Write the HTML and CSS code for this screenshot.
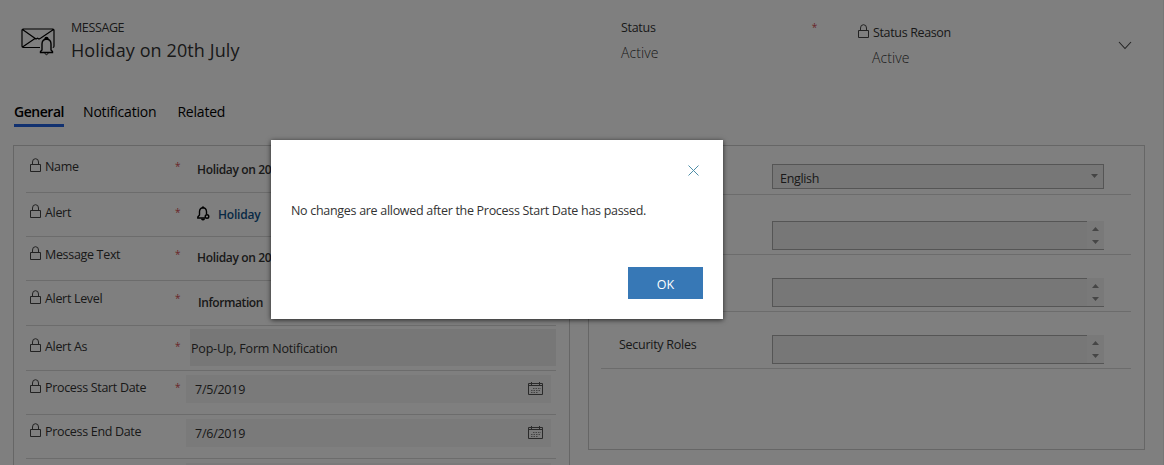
FILE: index.html
```html
<!DOCTYPE html>
<html lang="en">
<head>
<meta charset="utf-8">
<title>Message: Holiday on 20th July</title>
<link rel="stylesheet" href="styles.css">
</head>
<body>
<svg class="defs" width="0" height="0" aria-hidden="true">
  <symbol id="lock" viewBox="0 0 11 14"><path d="M.5 6.500h10v7H.5zM2.500 6.500V4a3 3.300 0 0 1 6 0v2.500" fill="none" stroke="currentColor"/></symbol>
  <symbol id="calendar" viewBox="0 0 15 13"><path d="M.5 1.500h14v11H.5zM.5 3.500h14M3.500 0v3M11.500 0v3" fill="none" stroke="currentColor"/><path d="M5 6.500h8M3 8.500h10M3 10.500h7" fill="none" stroke="currentColor" stroke-dasharray="1.500 1" opacity=".7"/></symbol>
  <symbol id="spin" viewBox="0 0 17 29"><path d="M5 10h7L8.500 6zM5 19h7l-3.500 4z" fill="currentColor"/></symbol>
</svg>
<div class="page">
  <header class="header">
    <svg class="entity-icon" width="34" height="28" viewBox="0 0 34 28" fill="none" stroke="#000" stroke-width="1.200">
      <path d="M19 19.500H2.200Q1 19.500 1 18.300V2.200Q1 1 2.200 1h29.600Q33 1 33 2.200v16.100q0 1.200-1.200 1.200M1.500 1.500l13.500 9.500 1.500-.800 1.500.800 1.500-.800L32.500 1.500M1.500 19l12.500-8.500"/>
      <path d="M19.500 24.500v-1l1.500-1.500v-6q0-4.500 4.500-5 4.500.500 4.500 5v6l1.500 1.500v1z" stroke-width="1.400"/>
      <path d="M24 10.800a1.500 1.500 0 0 1 3 0z" fill="#000"/>
      <path d="M23.500 25.200q2 3 4 0" stroke-width="1"/>
    </svg>
    <div class="title">
      <div class="entity">MESSAGE</div>
      <h1 class="record">Holiday on 20th July</h1>
    </div>
    <div class="status">
      <div class="status-label">Status <span class="req">*</span></div>
      <div class="status-value">Active</div>
    </div>
    <div class="status reason">
      <div class="status-label tight"><svg class="lock"><use href="#lock"/></svg>Status Reason</div>
      <div class="status-value">Active</div>
    </div>
    <svg class="chevron" width="14" height="9" viewBox="0 0 14 9"><path d="M1 1l6 6.500L13 1" fill="none" stroke="#444" stroke-width="1.100"/></svg>
  </header>
  <nav class="tabs">
    <a class="tab active">General</a>
    <a class="tab notification">Notification</a>
    <a class="tab">Related</a>
  </nav>
  <main class="panels">
    <section class="panel left">
      <div class="row r1"><div class="label"><svg class="lock"><use href="#lock"/></svg>Name</div><span class="req">*</span><div class="value">Holiday on 20th July</div></div>
      <div class="row r2"><div class="label"><svg class="lock"><use href="#lock"/></svg>Alert</div><span class="req">*</span><div class="value link"><svg class="bell" width="13" height="15" viewBox="0 0 13 15" fill="none" stroke="#000" stroke-width="1.400"><path d="M8 12H.800v-1L2.500 9V5.500Q2.800 2 6 1.800 9.200 2 9.500 5.500V8M5 1.200h2M4.500 13q1.500 1.500 3 0"/><circle cx="10" cy="10.500" r="1.800"/></svg>Holiday</div></div>
      <div class="row r3"><div class="label"><svg class="lock"><use href="#lock"/></svg>Message Text</div><span class="req">*</span><div class="value">Holiday on 20th July</div></div>
      <div class="row r4"><div class="label"><svg class="lock"><use href="#lock"/></svg>Alert Level</div><span class="req">*</span><div class="value info">Information</div></div>
      <div class="row r5"><div class="label"><svg class="lock"><use href="#lock"/></svg>Alert As</div><span class="req">*</span><div class="field multi">Pop-Up, Form Notification</div></div>
      <div class="row r6"><div class="label"><svg class="lock"><use href="#lock"/></svg>Process Start Date</div><span class="req">*</span><div class="field date">7/5/2019<svg class="cal"><use href="#calendar"/></svg></div></div>
      <div class="row r7"><div class="label"><svg class="lock"><use href="#lock"/></svg>Process End Date</div><div class="field date">7/6/2019<svg class="cal"><use href="#calendar"/></svg></div></div>
      <div class="row r8"><div class="field date"></div></div>
    </section>
    <section class="panel right">
      <div class="setting s1"><div class="select">English<svg width="7" height="4" viewBox="0 0 7 4"><path d="M0 0h7L3.500 4z" fill="#888"/></svg></div></div>
      <div class="setting s2"><div class="list"><div class="list-box"></div><svg class="spin"><use href="#spin"/></svg></div></div>
      <div class="setting s3"><div class="list"><div class="list-box"></div><svg class="spin"><use href="#spin"/></svg></div></div>
      <div class="setting s4"><div class="setting-label">Security Roles</div><div class="list"><div class="list-box"></div><svg class="spin"><use href="#spin"/></svg></div></div>
    </section>
  </main>
</div>
<div class="overlay"></div>
<div class="dialog" role="dialog">
  <svg class="close" width="11" height="11" viewBox="0 0 11 11"><path d="M.5.5l10 10M10.500.5l-10 10" fill="none" stroke="#4f8ea8"/></svg>
  <p class="dialog-text">No changes are allowed after the Process Start Date has passed.</p>
  <button class="ok">OK</button>
</div>
</body>
</html>
```

FILE: styles.css
```css
* { box-sizing: border-box; }
body { margin: 0; overflow: hidden; font: 12.5px/18px "Open Sans", sans-serif; letter-spacing: -0.32px; color: #333; }
.defs { display: block; height: 0; }
.page { height: 465px; overflow: hidden; border-right: 1px solid #ececec; }

.header { display: flex; height: 97px; padding-left: 21px; }
.entity-icon { margin-top: 28px; flex: none; overflow: visible; }
.title { width: 550px; margin-left: 16px; padding-top: 19px; }
.entity { letter-spacing: -0.38px; }
.record { margin: 0; font-size: 18px; line-height: 26px; font-weight: 400; letter-spacing: 0.1px; }
.status { width: 237px; padding-top: 19px; }
.status-label { display: flex; width: 196px; justify-content: space-between; letter-spacing: -0.3px; }
.status-label.tight { justify-content: flex-start; letter-spacing: -0.35px; }
.status-value { margin-top: 6px; font-size: 14px; line-height: 20px; font-weight: 300; letter-spacing: 0.1px; }
.status.reason { width: 260px; padding-top: 24px; }
.reason .status-value { padding-left: 14px; }
.chevron { margin-top: 41px; }

.lock { width: 11px; height: 14px; flex: none; margin: 0 4px 0 0; color: #444; }
.req { color: #d24a50; font-size: 10px; line-height: 16px; }

.tabs { display: flex; height: 48px; padding: 4px 0 0 14px; font-size: 14px; line-height: 22px; color: #000; }
.tab { height: 26px; margin-right: 19px; letter-spacing: -0.2px; }
.tab.notification { margin-right: 21px; }
.tab.active { font-weight: 600; letter-spacing: -0.46px; border-bottom: 3px solid #2263e0; }

.panels { display: flex; gap: 18px; padding-left: 13px; }
.panel { border: 1px solid #ccc; }
.left { width: 557px; height: 340px; padding: 0 13px 0 12px; }
.right { width: 557px; height: 305px; padding: 0 13px 0 12px; }

.row { display: flex; border-bottom: 1px solid #d8d8d8; padding-left: 4px; }
.label { display: flex; width: 145px; flex: none; }
.row .req { width: 11px; flex: none; }
.value { padding: 3px 0 0 11px; font-weight: 600; letter-spacing: -0.34px; font-size: 12px; }
.value.link { display: flex; padding-top: 2px; color: #0f538a; letter-spacing: -0.2px; }
.value.info { padding: 4px 0 0 12px; letter-spacing: -0.42px; }
.bell { margin: 0 8px 0 0; }
.r1 { height: 47px; padding-top: 12px; }
.r2 { height: 44px; padding-top: 11px; }
.r3 { height: 44px; padding-top: 9px; }
.r4 { height: 45px; padding-top: 9px; }
.r5 { height: 45px; }
.r5 .label, .r5 .req { margin-top: 12px; }
.r6, .r7, .r8 { height: 44px; }
.r6 .label, .r6 .req, .r7 .label { margin-top: 8px; }
.field { background: #f4f4f4; letter-spacing: -0.25px; }
.field.multi { width: 366px; height: 37px; margin: 3px 0 0 4px; padding: 11px 0 0 1px; background: #eee; letter-spacing: -0.2px; }
.field.date { display: flex; justify-content: space-between; width: 365px; height: 28px; margin-top: 4px; padding: 6px 8px 0 9px; }
.r7 .field { margin-left: 11px; }
.r8 .field { margin-left: 156px; }
.cal { width: 15px; height: 13px; margin-top: 1px; color: #555; }

.setting { display: flex; justify-content: flex-end; border-bottom: 1px solid #d8d8d8; padding-right: 27px; }
.s1 { height: 49px; padding-top: 18px; }
.s2 { height: 60px; padding-top: 26px; }
.s3 { height: 57px; padding-top: 23px; }
.s4 { height: 57px; padding-top: 23px; }
.select { display: flex; justify-content: space-between; align-items: center; width: 332px; height: 25px; padding: 5px 5px 0 7px; border: 1px solid #aaa; background: #eee; }
.select svg { margin-top: -7px; }
.setting-label { width: 153px; padding-top: 1px; letter-spacing: -0.27px; }
.list { display: flex; width: 332px; height: 29px; background: #f2f2f2; border-bottom: 1px solid #aaa; }
.list-box { width: 315px; border: solid #aaa; border-width: 1px 0 0 1px; background: #eee; }
.spin { width: 17px; height: 29px; color: #8c8c8c; }

.overlay { position: absolute; inset: 0; background: rgba(0, 0, 0, 0.5); }
.dialog { position: absolute; left: 271px; top: 140px; width: 452px; height: 179px; padding: 25px 20px 20px; display: flex; flex-direction: column; background: #fff; box-shadow: 0 1px 5px rgba(0, 0, 0, 0.7); color: #333; }
.close { align-self: flex-end; margin-right: 4px; }
.dialog-text { margin: 26px 0 0; letter-spacing: -0.3px; }
.ok { width: 75px; height: 32px; margin-top: auto; align-self: flex-end; padding: 4px 0 0; border: 0; background: #3778b6; color: #fff; font: 12.5px/18px "Open Sans", sans-serif; }
```
